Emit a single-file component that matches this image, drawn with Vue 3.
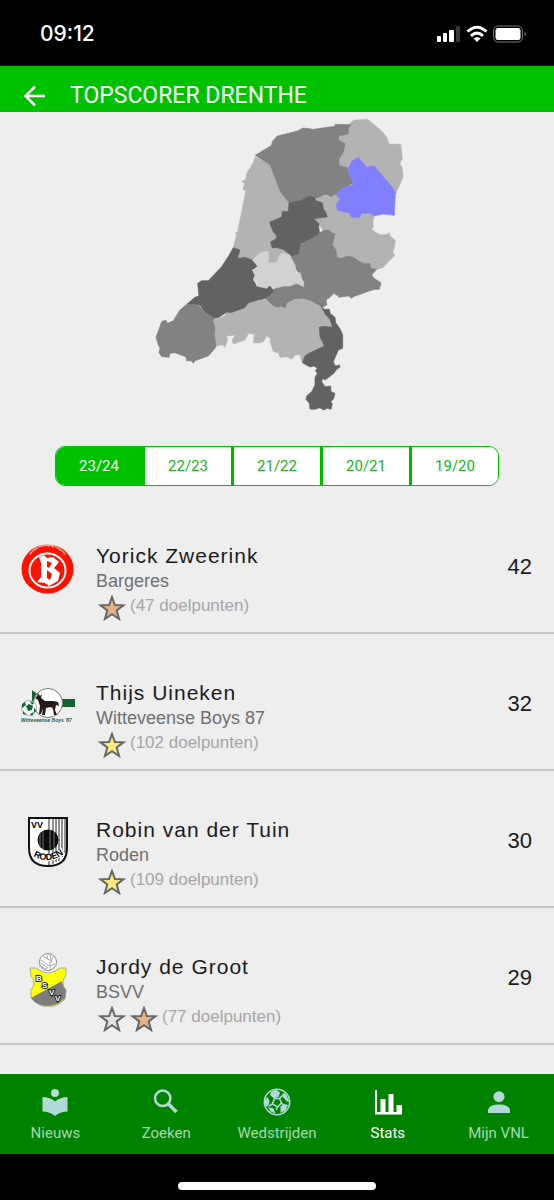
<script setup>
import { ref } from 'vue'

const seasons = ['23/24', '22/23', '21/22', '20/21', '19/20']
const season = ref('23/24')

const provinces = [
  { name: 'Noord-Holland', fill: '#b3b3b3', points: '331,134 370,155 407,240 432,272 430,295 412,298 410,315 375,330 385,350 394,375 400,395 440,400 420,445 400,455 340,460 322,446 300,438 277,442 285,413 265,407 274,372 272,362 278,360 303,235 294,233 299,214 290,208 302,203 305,185 326,150' },
  { name: 'Groningen', fill: '#b3b3b3', points: '612,38 625,25 667,22 710,57 724,74 732,96 767,97 772,140 765,150 766,158 771,165 774,195 753,243 735,245 670,200 610,185 605,165 582,160 582,140 575,90' },
  { name: 'Friesland', fill: '#828282', points: '331,130 380,100 382,88 397,72 455,58 475,48 505,52 570,43 570,37 617,38 610,50 610,65 583,72 580,85 600,95 595,120 582,140 582,160 607,167 615,190 625,212 610,222 590,230 573,248 557,256 550,250 537,248 530,258 510,258 495,252 485,262 432,272 407,240 375,160 370,155' },
  { name: 'Overijssel', fill: '#b3b3b3', points: '510,262 525,256 537,250 557,256 573,248 600,285 675,303 687,312 683,330 685,345 680,352 690,360 705,368 725,368 733,362 735,372 751,385 747,410 743,420 750,430 730,449 715,466 695,472 675,462 645,449 625,436 575,434 573,414 562,399 565,365 535,358 525,340 505,322 545,315' },
  { name: 'Gelderland', fill: '#828282', points: '522,350 525,362 537,355 555,355 558,362 570,365 565,385 562,399 573,414 575,434 587,438 610,433 625,436 645,449 658,455 675,455 678,467 695,472 680,489 687,499 708,512 703,532 690,532 675,536 625,554 620,559 610,552 580,556 580,550 570,548 570,541 555,556 543,564 546,579 530,586 495,566 475,560 450,564 427,574 423,589 407,584 400,590 385,584 360,559 385,534 400,515 480,515 430,432 460,405' },
  { name: 'Flevoland', fill: '#626262', points: '432,272 470,265 495,252 510,258 512,266 532,272 535,290 542,300 547,315 507,320 522,335 520,365 505,375 467,395 460,425 440,432 415,412 395,407 382,408 376,390 395,380 393,368 385,360 375,335 375,330 410,315 412,298 430,298' },
  { name: 'Zuid-Holland', fill: '#626262', points: '265,407 285,414 277,440 300,436 322,444 338,462 322,474 330,489 325,504 335,522 365,529 372,519 385,534 380,544 360,559 330,572 310,574 300,589 255,604 240,604 220,617 205,619 178,599 165,579 125,577 150,556 162,552 158,514 170,506 190,506 230,464 252,430' },
  { name: 'Utrecht', fill: '#d2d2d2', points: '322,444 335,432 348,422 366,418 370,420 370,452 395,452 405,429 415,422 437,432 439,439 450,459 453,484 465,482 477,524 455,514 435,522 415,522 390,529 375,519 365,529 335,522 337,512 325,504 330,489 322,474 338,470 338,462' },
  { name: 'Zeeland', fill: '#828282', points: '125,577 160,579 178,599 207,619 212,649 215,699 210,709 190,732 150,746 145,754 139,746 125,746 122,734 90,722 75,724 72,736 50,734 42,722 45,709 40,699 33,676 50,629 62,624 68,634 85,626 105,594' },
  { name: 'Noord-Brabant', fill: '#b3b3b3', points: '205,624 240,612 243,602 260,604 300,589 312,574 345,564 365,564 368,572 390,586 423,589 427,574 450,562 475,562 500,569 530,586 542,609 555,622 562,646 523,648 525,674 540,702 480,732 478,749 470,747 465,727 450,729 440,742 425,734 405,736 400,719 390,719 400,722 385,718 375,689 378,680 365,671 355,689 340,693 325,692 328,667 310,664 300,684 265,696 262,684 270,669 245,672 247,685 240,706 232,698 215,702 210,674 212,649' },
  { name: 'Limburg', fill: '#626262', points: '528,581 538,592 553,592 556,605 570,616 572,632 585,650 593,669 593,709 580,714 565,749 570,762 585,759 584,766 575,772 567,784 540,804 533,799 530,809 540,824 557,822 558,839 570,844 565,862 557,869 562,875 558,892 548,889 535,894 525,887 510,892 495,891 493,874 483,862 485,852 500,839 510,819 510,796 517,784 511,776 517,769 507,762 495,765 472,752 480,732 492,724 538,702 525,674 523,646 535,643 562,646 555,622 542,609' },
  { name: 'Drenthe', fill: '#8080ff', points: '634,140 640,137 645,142 665,166 687,162 741,225 751,242 748,310 715,306 687,312 675,303 650,304 643,316 620,316 613,303 590,298 578,295 573,278 585,262 573,248 590,230 623,218 625,210 615,192 609,172 620,148' },
]

const scorers = [
  { name: 'Yorick Zweerink', club: 'Bargeres', stars: ['bronze'], total: 47, goals: 42 },
  { name: 'Thijs Uineken', club: 'Witteveense Boys 87', stars: ['gold'], total: 102, goals: 32 },
  { name: 'Robin van der Tuin', club: 'Roden', stars: ['gold'], total: 109, goals: 30 },
  { name: 'Jordy de Groot', club: 'BSVV', stars: ['silver', 'bronze'], total: 77, goals: 29 },
]

const tabs = ['Nieuws', 'Zoeken', 'Wedstrijden', 'Stats', 'Mijn VNL']
const activeTab = ref('Stats')
</script>

<template>
  <div class="app">
    <div class="status-bar">
      <span class="clock">09:12</span>
      <svg class="status-icons" viewBox="0 0 96 20" aria-hidden="true">
        <g fill="#fff">
          <rect x="1" y="12" width="4" height="6" rx="1" />
          <rect x="7" y="9" width="4" height="9" rx="1" />
          <rect x="13" y="6" width="5" height="12" rx="1" />
          <rect x="20" y="2" width="4" height="16" rx="1" fill="#3a3a3a" />
        </g>
        <g fill="none" stroke="#fff" stroke-width="3">
          <path d="M31.500 7.500Q41-1 50.500 7.500" />
          <path d="M35 11.800Q41 6.500 47 11.800" />
        </g>
        <path d="M37.500 14.500Q41 11.500 44.500 14.500L41 18z" fill="#fff" />
        <rect x="57.500" y="2" width="29" height="16" rx="4.500" fill="none" stroke="#777" />
        <rect x="59.500" y="4" width="25" height="12" rx="2.500" fill="#fff" />
        <path d="M88.500 7.500q3 2.500 0 5z" fill="#777" />
      </svg>
    </div>

    <header class="title-bar">
      <button class="back" type="button" aria-label="Terug">
        <svg viewBox="0 0 24 24"><path d="M22 12H3M12 2.500L2.500 12L12 21.500" /></svg>
      </button>
      <h1>TOPSCORER DRENTHE</h1>
    </header>

    <main>
      <svg class="map" viewBox="-9 0 810 924" role="img" aria-label="Drenthe">
        <polygon
          v-for="p in provinces"
          :key="p.name"
          :points="p.points"
          :fill="p.fill"
          :stroke="p.fill"
        />
      </svg>

      <div class="seasons">
        <button
          v-for="s in seasons"
          :key="s"
          type="button"
          :class="{ active: s === season }"
          @click="season = s"
        >
          {{ s }}
        </button>
      </div>

      <ul class="scorers">
        <li v-for="s in scorers" :key="s.name">
          <svg v-if="s.club === 'Bargeres'" class="logo" viewBox="0 0 54 54">
            <path id="badge-arc" d="M6 24A20.500 20 0 0 1 47 24" fill="none" />
            <ellipse cx="26.500" cy="27" rx="26" ry="24.500" fill="#fb1200" />
            <text class="badge-text"><textPath href="#badge-arc" startOffset="50%">voetbal vereniging bargeres</textPath></text>
            <ellipse cx="26.500" cy="28.500" rx="18" ry="17" fill="none" stroke="#fff" stroke-width="2" />
            <path d="M18 15l5-2 3 3 6-1 6 5-5 6 6 5-2 8-9 5-4-3-8-1 4-5V21z" fill="#fff" />
            <path d="M26 19l5 2-3 5-2-1zM26 28l5 4-2 6-3-2z" fill="#fb1200" />
          </svg>
          <svg v-else-if="s.club === 'Witteveense Boys 87'" class="logo" viewBox="0 0 54 54">
            <path d="M11 11l8 6v10h-8z" fill="#126332" />
            <path d="M38 20h16v8H38z" fill="#126332" />
            <circle cx="27" cy="24" r="14.500" fill="#fff" stroke="#777" stroke-width="1" />
            <circle cx="8" cy="29" r="7.500" fill="#fff" stroke="#9ab5a2" />
            <path d="M5 27l3-2 4 2-1 4-4 1zM1 25l3-2 1 3-4 3zM9 22l4 2-2 2zM13 28l2 4-2 2zM2 32l4 4-4-1zM9 35l4-2-2 4z" fill="#126332" />
            <path d="M17 14l2 3 2-2-1 4 4 3h8l5 1 1 4-3-1-1 5 2 5h-3l-1-6-2-2-5 1-1 7h-3l1-7-2 6h-2l1-8-2-6-3-2 2-2z" fill="#251b18" />
            <text class="boys-text" x="0" y="43">Witteveense Boys '87</text>
          </svg>
          <svg v-else-if="s.club === 'Roden'" class="logo" viewBox="0 0 54 54">
            <path d="M8 2h38v30q0 18-19 18T8 32z" fill="#fff" stroke="#111" stroke-width="2" />
            <path d="M28 3v46M32 3v45M35 3v43M38 3v42M41 3v38M44 3v34" stroke="#222" stroke-width="1" />
            <circle cx="27" cy="24" r="10.500" fill="#0b0b0b" />
            <path d="M19 17v14M22 15v18M29 14v20M33 16v16" stroke="#777" stroke-width="1" />
            <text class="vv-text" x="10" y="12">VV</text>
            <path d="M13 34q14 9 28-2l2 7q-15 11-29 3z" fill="#fff" />
            <path id="roden-arc" d="M12 40q15 9 31-2" fill="none" />
            <text class="roden-text"><textPath href="#roden-arc" startOffset="50%">RODEN</textPath></text>
          </svg>
          <svg v-else class="logo" viewBox="0 0 54 54">
            <path d="M9 15h6q12 10 24 0h6v7q-6 8 0 15l-1 9q-8 8-17 8T10 45V37q6-7 0-14z" fill="#ffff08" stroke="#aaa" stroke-width="1" />
            <path d="M10 45l31-17q0 5 4 9l-1 8q-8 8-17 8-11 0-17-8z" fill="#7d7d7d" />
            <circle cx="27" cy="9" r="8.500" fill="#fff" stroke="#888" stroke-width="1" />
            <path d="M20 7l8 6 6-2M20 10l7 5M22 3l8 5-1-7M26 2l1 5M29 9v8M32 4l-2 6M18 13l8 3" fill="none" stroke="#aaa" />
            <g class="bsvv-text">
              <text x="15" y="28">B</text>
              <text x="21" y="35">S</text>
              <text x="28" y="42">V</text>
              <text x="34" y="48">V</text>
            </g>
          </svg>

          <div class="player">
            <h2>{{ s.name }}</h2>
            <p class="club">{{ s.club }}</p>
            <div class="career">
              <svg v-for="star in s.stars" :key="star" class="star" :class="star" viewBox="0 0 32 26">
                <path d="M16 2L18.900 10L27.500 10.300L20.700 15.500L23.100 24L16 19.200L8.900 24L11.300 15.500L4.500 10.300L13.100 10z" />
              </svg>
              <span>({{ s.total }} doelpunten)</span>
            </div>
          </div>
          <span class="goals">{{ s.goals }}</span>
        </li>
      </ul>
    </main>

    <nav class="tab-bar">
      <a
        v-for="tab in tabs"
        :key="tab"
        href="#"
        :class="{ active: tab === activeTab }"
        @click.prevent="activeTab = tab"
      >
        <svg viewBox="0 0 28 28" aria-hidden="true">
          <g v-if="tab === 'Nieuws'">
            <circle cx="14" cy="5" r="4" />
            <path d="M1.500 9Q9 9 14 13.500Q19 9 26.500 9V23.500Q19 23.500 14 28Q9 23.500 1.500 23.500z" />
          </g>
          <g v-else-if="tab === 'Zoeken'">
            <circle class="lens" cx="10.700" cy="10.300" r="7.700" />
            <path class="handle" d="M16 15.600L24.500 24" />
          </g>
          <g v-else-if="tab === 'Wedstrijden'">
            <circle class="line" cx="14" cy="14" r="12.700" />
            <path class="line" d="M11.500 10.500L16.500 10.500L18.500 15L14.500 19L9.500 16zM9.500 16L6 18M11.500 10.500L10 7M16.500 10.500L20 7M18.500 15L21 18M14.500 19L13 22" />
            <path d="M8 4l5-2.500 4 3-1.500 4.500-5 1-3.500-3zM1.500 12l3-3 2 4-1 5-3 1zM20 5l3 1 3.500 8-3-1-4.500-5zM17.500 18.500l4-2.500 3.500 1-2.500 5.500-5 2.500zM5 19l5.500 1.500 2 5-5-2z" />
          </g>
          <path v-else-if="tab === 'Stats'" d="M1 2h2v22h3.500V11h5v13h3V6h5v18h3v-7H28v9.500H1z" />
          <g v-else>
            <circle cx="14" cy="8.700" r="5.500" />
            <path d="M3 25V22Q4 16.500 14 16.500Q24 16.500 25 22V25z" />
          </g>
        </svg>
        <span>{{ tab }}</span>
      </a>
    </nav>

    <div class="home-area"><div class="home-indicator" /></div>
  </div>
</template>

<style>
body {
  background: #000;
}
</style>

<style scoped>
.app {
  display: flex;
  flex-direction: column;
  min-height: 100vh;
  background: #eee;
  font-family: 'Liberation Sans', Arial, sans-serif;
}

.status-bar {
  display: flex;
  align-items: center;
  justify-content: space-between;
  height: 66px;
  padding: 2px 22px 0 40px;
  box-sizing: border-box;
  background: #000;
  color: #fff;
}

.clock {
  font: 500 21px/24px Inter, sans-serif;
}

.status-icons {
  width: 96px;
  height: 20px;
}

.title-bar {
  display: flex;
  align-items: center;
  gap: 22px;
  height: 46px;
  padding: 14px 22px 0;
  box-sizing: border-box;
  background: #00c100;
  color: #fff;
}

.back {
  padding: 0;
  border: 0;
  background: none;
}

.back svg {
  display: block;
  width: 26px;
  height: 24px;
  fill: none;
  stroke: #fff;
  stroke-width: 2.5;
}

.title-bar h1 {
  margin: 0;
  font: 400 23px/28px Roboto, sans-serif;
}

main {
  flex: 1;
}

.map {
  display: block;
  width: 270px;
  height: 308px;
  margin: 0 auto;
}

.map polygon {
  stroke-width: 2;
}

.seasons {
  display: flex;
  margin: 26px 55px 11px;
  border: 1px solid #00c100;
  border-radius: 10px;
  overflow: hidden;
}

.seasons button {
  flex: 1;
  height: 38px;
  padding: 0;
  border: 0;
  border-left: 3px solid #00b800;
  background: #fff;
  color: #19b519;
  font: 400 15px/20px Roboto, sans-serif;
}

.seasons button:first-child {
  border-left: 0;
}

.seasons button.active {
  background: #00c100;
  color: #fff;
}

.seasons button.active + button {
  border-left-color: #00c100;
}

.scorers {
  margin: 0;
  padding: 0;
  list-style: none;
}

.scorers li {
  display: flex;
  align-items: flex-start;
  height: 137px;
  padding: 45px 22px 0 21px;
  box-sizing: border-box;
  border-bottom: 2px solid #c8c8c8;
}

.logo {
  flex: none;
  width: 54px;
  height: 54px;
}

.player {
  flex: 1;
  margin: 1px 0 0 21px;
}

.player h2 {
  margin: 0;
  color: #1b1b1b;
  font-size: 21px;
  font-weight: 400;
  line-height: 26px;
  letter-spacing: 1px;
}

.club {
  margin: 0;
  color: #707070;
  font-size: 18px;
  line-height: 24px;
}

.career {
  display: flex;
  align-items: center;
  height: 26px;
  color: #a6a6a6;
  font-size: 17px;
  line-height: 24px;
}

.star {
  width: 32px;
  height: 26px;
  margin-top: 4px;
  stroke: #666;
  stroke-width: 2;
}

.career span {
  margin-left: 2px;
}

.bronze {
  fill: #e4b384;
}

.gold {
  fill: #ffec80;
}

.silver {
  fill: #e2e2e2;
}

.goals {
  margin-top: 12px;
  color: #1b1b1b;
  font-size: 22px;
  line-height: 26px;
}

.badge-text {
  fill: #fff;
  font-size: 3px;
  font-weight: 700;
  text-anchor: middle;
}

.boys-text {
  fill: #2f5c3c;
  font-size: 5px;
  font-style: italic;
  font-weight: 700;
}

.vv-text {
  font-size: 9px;
  font-weight: 700;
}

.roden-text {
  font-size: 9px;
  font-weight: 700;
  text-anchor: middle;
}

.bsvv-text {
  fill: #fff;
  stroke: #222;
  stroke-width: 2px;
  paint-order: stroke;
  font-size: 8px;
  font-weight: 700;
}

.tab-bar {
  display: flex;
  height: 80px;
  background: #008200;
}

.tab-bar a {
  flex: 1;
  display: flex;
  flex-direction: column;
  align-items: center;
  gap: 7px;
  padding-top: 14px;
  color: #a5d7b5;
  fill: #b2d8d8;
  font: 400 15px/20px Roboto, sans-serif;
  text-decoration: none;
}

.tab-bar svg {
  width: 28px;
  height: 28px;
}

.tab-bar .line,
.tab-bar .lens,
.tab-bar .handle {
  fill: none;
  stroke: #b2d8d8;
  stroke-width: 1.5;
}

.tab-bar .lens {
  stroke-width: 2.5;
}

.tab-bar .handle {
  stroke-width: 3.5;
}

.tab-bar a.active {
  color: #fff;
  fill: #fff;
}

.home-area {
  display: flex;
  justify-content: center;
  align-items: flex-end;
  height: 46px;
  padding-bottom: 10px;
  box-sizing: border-box;
  background: #000;
}

.home-indicator {
  width: 198px;
  height: 8px;
  border-radius: 4px;
  background: #fff;
}
</style>
